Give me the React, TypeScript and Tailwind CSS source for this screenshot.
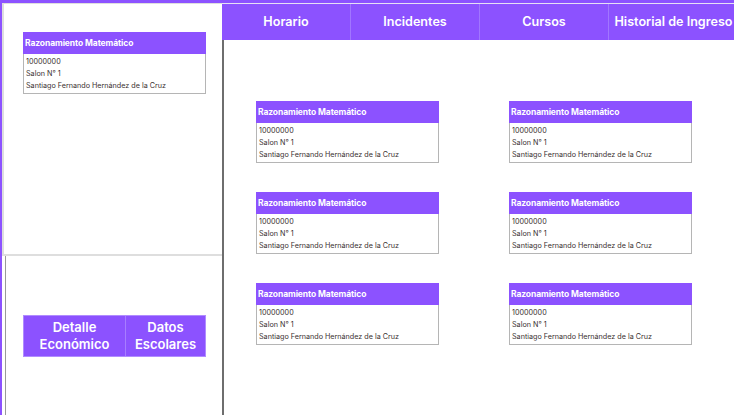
import React from "react";

const font = { fontFamily: "Inter, 'Noto Sans', sans-serif" };

function Card() {
  return (
    <div className="w-[183px] h-[62px] flex flex-col">
      <div className="h-[22px] bg-[#8c52ff] flex items-center px-[2px] text-white text-[8.5px] font-bold tracking-[-0.1px]">
        Razonamiento Matemático
      </div>
      <div className="flex-1 border border-t-0 border-[#b5b5b5] px-[2px] pt-[2px] text-[7.2px] leading-[12px] text-[#3a3030]">
        <div>10000000</div>
        <div>Salon N° 1</div>
        <div>Santiago Fernando Hernández de la Cruz</div>
      </div>
    </div>
  );
}

export default function App() {
  const nav = ["Horario", "Incidentes", "Cursos", "Historial de Ingreso"];
  return (
    <div
      style={font}
      className="w-[734px] h-[415px] overflow-hidden bg-white border-t-[3px] border-l-[2px] border-[#8c52ff] flex"
    >
      <div className="w-[220px] flex flex-col shrink-0">
        <div className="h-[253px] border-l-2 border-t border-b-2 border-[#dedede] pl-[19px] pt-[28px]">
          <Card />
        </div>
        <div className="flex-1 ml-[3px] border-l border-[#9a9a9a] flex items-start pl-[17px] pt-[59px]">
          <div className="w-[183px] h-[42px] flex border border-[#b08cff] bg-[#8c52ff] text-white text-[13px] font-semibold leading-[17px]">
            <div className="w-[102px] flex items-center justify-center text-center border-r border-[#a77dff]">
              Detalle
              <br />
              Económico
            </div>
            <div className="flex-1 flex items-center justify-center text-center">
              Datos
              <br />
              Escolares
            </div>
          </div>
        </div>
      </div>
      <div className="flex-1 flex flex-col min-w-0">
        <div className="h-[1px] bg-[#e6e0f5]" />
        <div className="h-[36px] bg-[#8c52ff] flex overflow-hidden">
          {nav.map((n, i) => (
            <div
              key={n}
              className={
                "w-[129px] shrink-0 flex items-center justify-center text-white text-[12.6px] font-semibold whitespace-nowrap pt-[1px] " +
                (i < 3 ? "border-r border-[#a176ff]" : "")
              }
            >
              {n}
            </div>
          ))}
        </div>
        <div className="flex-1 border-l-2 border-[#6e6e6e] pl-[32px] pt-[61px]">
          <div className="grid grid-cols-[183px_183px] gap-x-[70px] gap-y-[29px]">
            <Card />
            <Card />
            <Card />
            <Card />
            <Card />
            <Card />
          </div>
        </div>
      </div>
    </div>
  );
}
